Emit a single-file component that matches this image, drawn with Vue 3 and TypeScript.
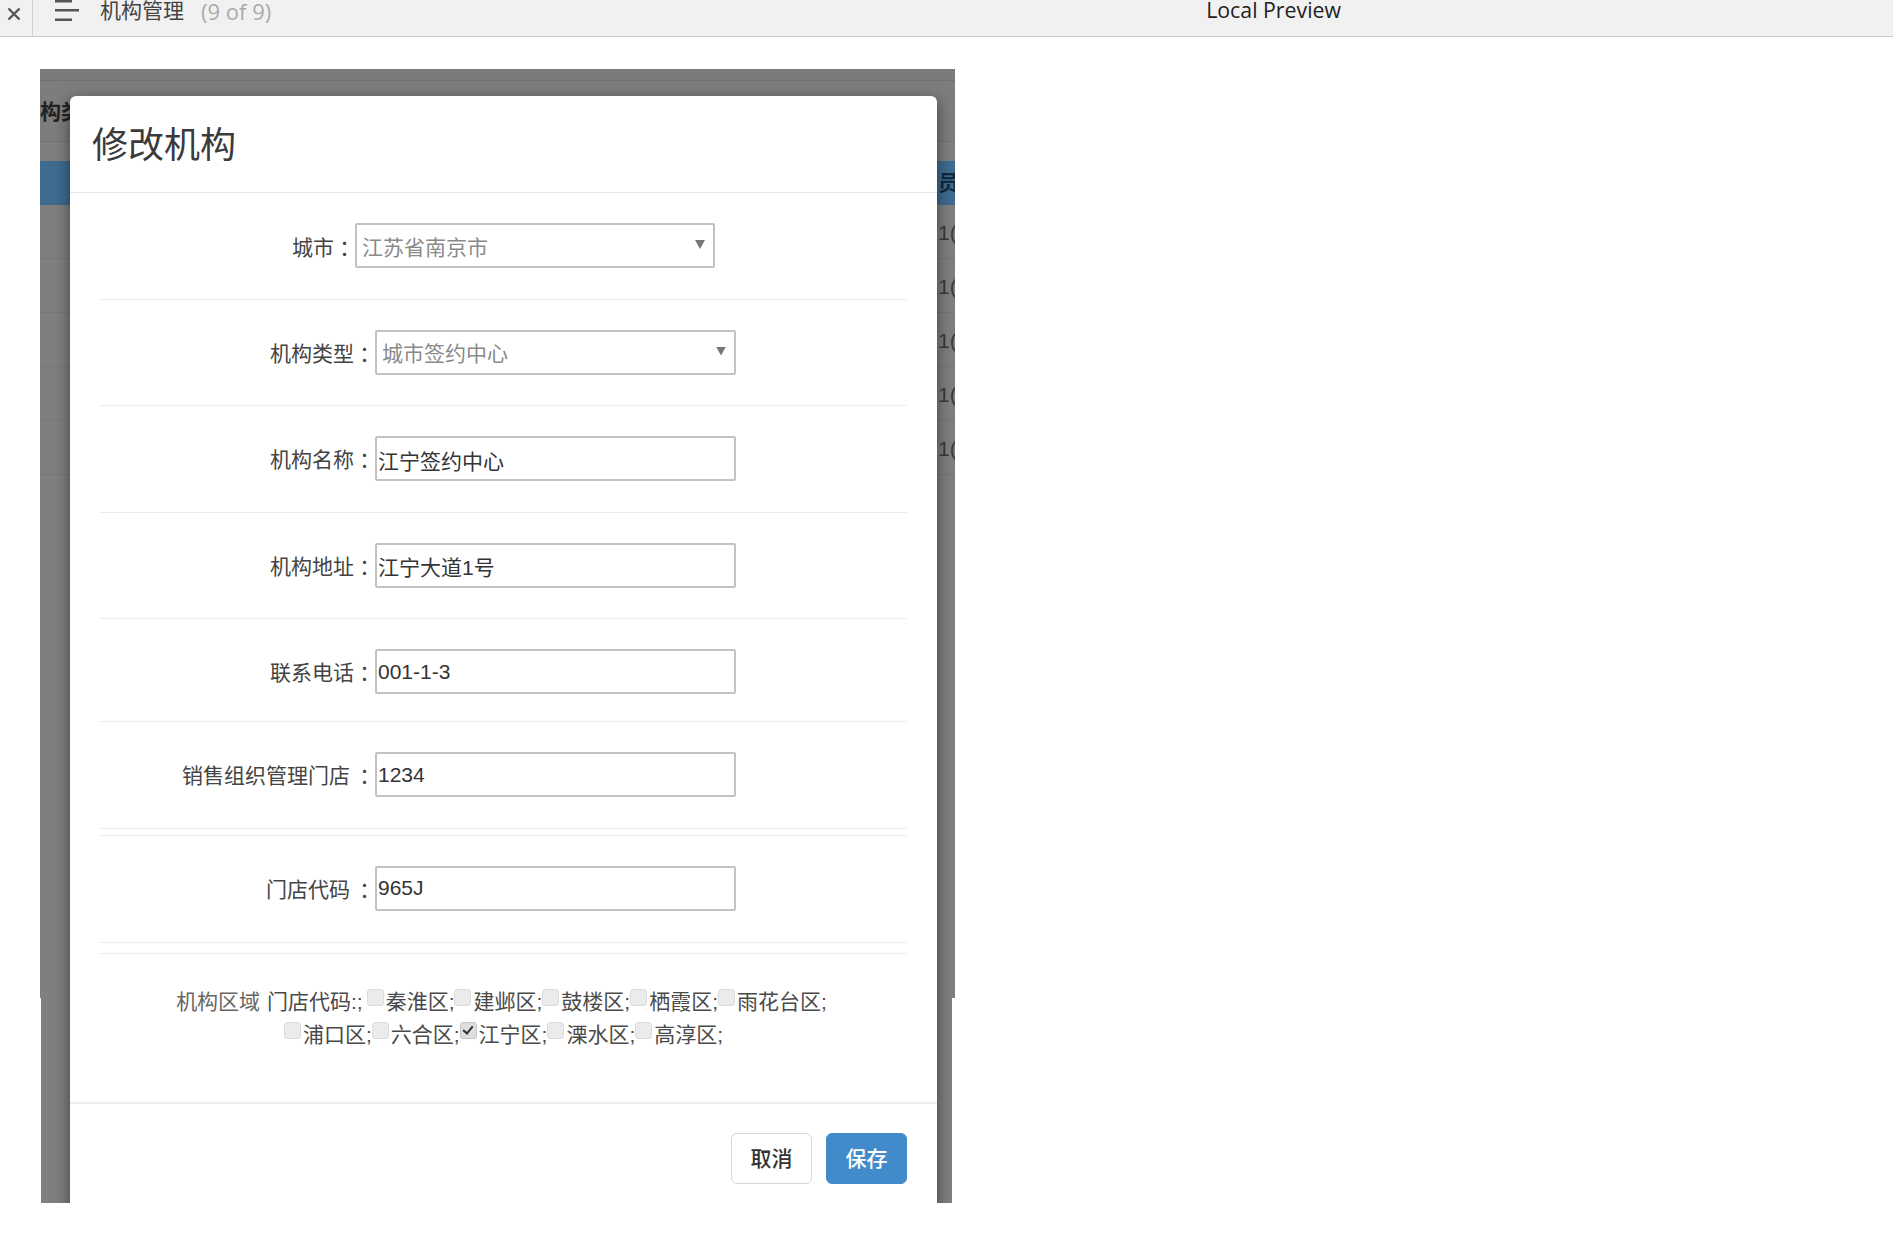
<template>
  <div class="page">
    <header class="toolbar">
      <div class="close-cell">
        <svg class="close-icon" width="14" height="14" viewBox="0 0 14 14">
          <path d="M1.5 1.5 L12.5 12.5 M12.5 1.5 L1.5 12.5" />
        </svg>
      </div>
      <svg class="menu-icon" width="24" height="24" viewBox="0 0 24 24">
        <rect x="0" y="0" width="17" height="2.5" />
        <rect x="0" y="9" width="24" height="2.5" />
        <rect x="0" y="18.5" width="17" height="2.5" />
      </svg>
      <span class="doc-title">机构管理</span>
      <span class="doc-count">(9 of 9)</span>
      <span class="preview-name">Local Preview</span>
    </header>

    <main class="shot">
      <div class="backdrop">
        <div class="bg-strip" />
        <div class="bg-filter"><b>机构类</b></div>
        <div class="bg-head"><b>员</b></div>
        <div v-for="n in 5" :key="n" class="bg-row"><span>1(</span></div>

        <section class="modal">
          <div class="modal-header">
            <h4>修改机构</h4>
          </div>

          <div class="modal-body">
            <template v-for="row in rows" :key="row.label">
              <div class="row" :class="row.cls">
                <label class="row-label">
                  <span class="row-text">{{ row.label }}</span>
                  <span class="colon">：</span>
                </label>
                <div v-if="row.options" class="select-wrap">
                  <select class="field select-field" disabled>
                    <option>{{ row.value }}</option>
                  </select>
                </div>
                <input v-else class="field" :class="{ latin: row.latin }" type="text" :value="row.value" />
              </div>
              <div v-if="row.rule" class="rule" :class="row.rule" />
            </template>

            <div class="region">
              <div class="region-line">
                <span class="region-label">机构区域</span> <span class="region-code">门店代码:;</span><template v-for="d in districtsA" :key="d">
                  <input v-model="picked" class="check" type="checkbox" :value="d" />{{ d }};</template>
              </div>
              <div class="region-line">
                <template v-for="d in districtsB" :key="d">
                  <input v-model="picked" class="check" type="checkbox" :value="d" />{{ d }};</template>
              </div>
            </div>
          </div>

          <div class="modal-footer">
            <button class="btn" type="button">取消</button>
            <button class="btn primary" type="button">保存</button>
          </div>
        </section>
      </div>
    </main>
  </div>
</template>

<script setup lang="ts">
import { ref } from 'vue'

interface Row {
  label: string
  value: string
  options?: boolean
  latin?: boolean
  cls?: string
  rule?: string
}

const rows: Row[] = [
  { label: '城市', value: '江苏省南京市', options: true, cls: 'row-city' },
  { label: '机构类型', value: '城市签约中心', options: true },
  { label: '机构名称', value: '江宁签约中心' },
  { label: '机构地址', value: '江宁大道1号' },
  { label: '联系电话', value: '001-1-3', latin: true, cls: 'row-short' },
  { label: '销售组织管理门店', value: '1234', latin: true, cls: 'row-shift', rule: 'rule-near' },
  { label: '门店代码', value: '965J', latin: true, cls: 'row-shift', rule: 'rule-far' },
]

const districtsA = ['秦淮区', '建邺区', '鼓楼区', '栖霞区', '雨花台区']
const districtsB = ['浦口区', '六合区', '江宁区', '溧水区', '高淳区']
const picked = ref<string[]>(['江宁区'])
</script>

<style>
html,
body {
  margin: 0;
  background: #fff;
}
</style>

<style scoped>
.page {
  font-family: "Liberation Sans", "Noto Sans CJK SC", sans-serif;
  font-size: 21px;
  color: #444;
}

.toolbar {
  display: flex;
  align-items: flex-start;
  height: 36px;
  background: #f1f1f1;
  border-bottom: 1px solid #c8c8c8;
}

.close-cell {
  width: 33px;
  height: 36px;
  border-right: 1px solid #cfcfcf;
  padding: 2px 0 0 7px;
  box-sizing: border-box;
}

.close-icon path {
  fill: none;
  stroke: #555;
  stroke-width: 2.4;
}

.menu-icon {
  margin: 0 0 0 22px;
  fill: #555;
}

.doc-title {
  margin-left: 21px;
  line-height: 22px;
  color: #444;
}

.doc-count {
  margin-left: 17px;
  line-height: 22px;
  color: #aaa;
  font-family: "Open Sans", sans-serif;
  font-size: 22px;
}

.preview-name {
  margin-left: auto;
  margin-right: 552px;
  line-height: 20px;
  color: #222;
  font-family: "Open Sans", sans-serif;
  font-size: 21.3px;
}

.shot {
  padding: 32px 0 0 40px;
}

.backdrop {
  position: relative;
  width: 915px;
  height: 1134px;
  overflow: hidden;
  background: #7f7f7f;
  clip-path: polygon(0 0, 915px 0, 915px 929px, 912px 929px, 912px 1134px, 1px 1134px, 1px 929px, 0 929px);
}

.bg-strip {
  height: 11px;
  background: #7b7b7b;
  border-bottom: 1px solid #707070;
}

.bg-filter {
  height: 60px;
  line-height: 62px;
  background: #7d7d7d;
  border-bottom: 1px solid #727272;
  color: #222;
  white-space: nowrap;
}

.bg-filter b {
  margin-left: -21px;
}

.bg-head {
  margin-top: 19px;
  height: 44px;
  line-height: 44px;
  background: #3e6b90;
  color: #15293b;
  padding-left: 898px;
  white-space: nowrap;
}

.bg-row {
  height: 53px;
  line-height: 56px;
  border-bottom: 1px solid #777;
  padding-left: 898px;
  color: #3a3a3a;
  white-space: nowrap;
}

.modal {
  position: absolute;
  left: 30px;
  top: 27px;
  width: 867px;
  background: #fff;
  border-radius: 6px;
  box-shadow: 0 5px 15px rgba(0, 0, 0, 0.5);
}

.modal-header {
  height: 97px;
  box-sizing: border-box;
  border-bottom: 1px solid #e8e8e8;
  padding: 0 0 0 22px;
}

.modal-header h4 {
  margin: 0;
  font-size: 36px;
  font-weight: 400;
  line-height: 99px;
  color: #3a3a3a;
}

.modal-body {
  padding: 0 30px;
}

.row {
  display: flex;
  padding: 30px 0 30.6px;
  border-bottom: 1px solid #ededed;
}

.row-short {
  padding-bottom: 27px;
}

.row-label {
  display: flex;
  justify-content: flex-end;
  width: 275px;
  height: 45px;
  line-height: 47px;
  color: #444;
}

.row-city .row-label {
  width: 255px;
  line-height: 49px;
}

.row-shift .row-text {
  margin-right: 4px;
}

.colon {
  width: 21px;
  font-family: "Noto Sans CJK TC", sans-serif;
}

.field {
  box-sizing: border-box;
  width: 361px;
  height: 45px;
  margin: 0;
  padding: 2px 0 0 1px;
  border: 2px solid #c2c2c2;
  border-radius: 2px;
  background: #fff;
  color: #333;
  font-family: inherit;
  font-size: 21px;
  outline: none;
}

.field.latin {
  padding-top: 0;
}

.select-wrap {
  position: relative;
  width: 361px;
  height: 45px;
}

.row-city .select-wrap,
.row-city .field {
  width: 360px;
}

.row-city .field {
  padding-top: 4px;
}

.select-wrap::after {
  content: "";
  position: absolute;
  top: 17px;
  right: 10px;
  width: 10px;
  height: 9px;
  background: #777;
  clip-path: polygon(0 0, 100% 0, 50% 100%);
}

.select-field {
  appearance: none;
  padding-left: 5px;
  color: #8a8a8a;
  opacity: 1;
}

.rule {
  border-top: 1px solid #ededed;
}

.rule-near {
  margin-top: 6px;
}

.rule-far {
  margin-top: 10px;
}

.region {
  padding: 31px 0 51px;
  text-align: center;
  line-height: 33px;
  color: #4a4a4a;
  white-space: nowrap;
}

.region-label {
  margin-left: -4px;
  color: #666;
}

.region-code {
  margin: 0 4px 0 1px;
}

.check {
  appearance: none;
  position: relative;
  box-sizing: border-box;
  width: 17px;
  height: 17px;
  margin: 0 2px 0 0;
  vertical-align: 3px;
  background: #ebebeb;
  border: 1px solid #dcdcdc;
  border-radius: 3px;
}

.check:checked {
  background: #dedede;
  border-color: #c4c4c4;
}

.check:checked::after {
  content: "";
  position: absolute;
  left: 4px;
  top: 1px;
  width: 4px;
  height: 8px;
  border: solid #333;
  border-width: 0 2.5px 2.5px 0;
  transform: rotate(40deg);
}

.modal-footer {
  display: flex;
  justify-content: flex-end;
  gap: 14px;
  padding: 29px 30px 30px;
  border-top: 2px solid #eee;
}

.btn {
  width: 81px;
  height: 51px;
  padding: 0 0 2px;
  border: 1px solid #d6d6d6;
  border-radius: 6px;
  background: #fff;
  color: #333;
  font-family: inherit;
  font-size: 21px;
  font-weight: 500;
}

.btn.primary {
  background: #428bca;
  border-color: #428bca;
  color: #fff;
}
</style>
